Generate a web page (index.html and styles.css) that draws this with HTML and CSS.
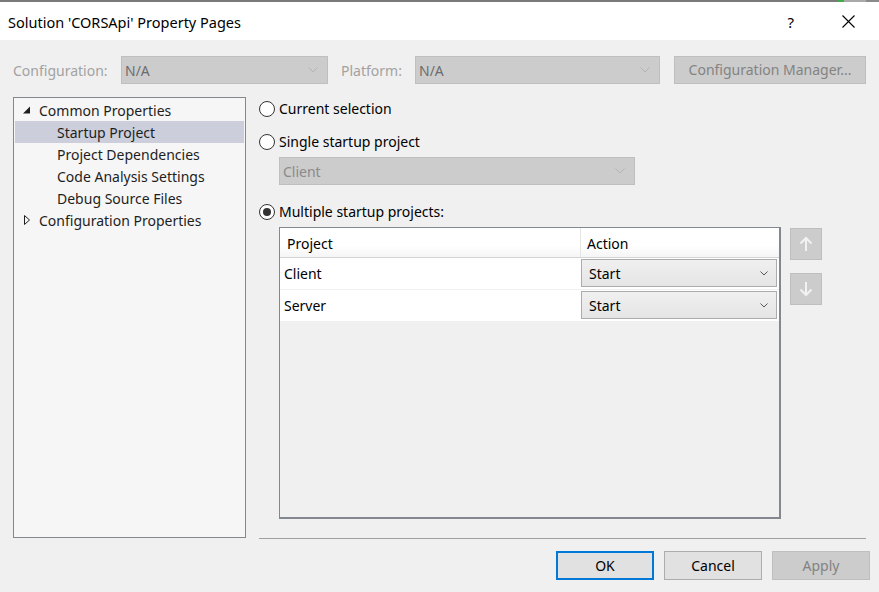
FILE: index.html
```html
<!DOCTYPE html>
<html lang="en">
<head>
<meta charset="utf-8">
<title>Solution 'CORSApi' Property Pages</title>
<link rel="stylesheet" href="styles.css">
</head>
<body>
<div class="topline"><span class="tl-fill"></span><span class="tl-green"></span><span class="tl-gray"></span><span class="tl-end"></span></div>
<header class="titlebar">
  <span class="title">Solution 'CORSApi' Property Pages</span>
  <span class="help">?</span>
  <svg class="close" width="13" height="13" viewBox="0 0 13 13"><path d="M0.5 0.5L12.5 12.5M12.5 0.5L0.5 12.5" stroke="#000" stroke-width="1.1" fill="none"/></svg>
</header>
<main class="dialog">
  <div class="config-row">
    <span class="lbl lbl-config">Configuration:</span>
    <div class="combo combo-disabled combo-config"><span class="combo-text">N/A</span><svg class="chev" width="10" height="6" viewBox="0 0 10 6"><path d="M0.5 0.5L5 5L9.5 0.5" stroke="#b4b4b4" fill="none"/></svg></div>
    <span class="lbl lbl-platform">Platform:</span>
    <div class="combo combo-disabled combo-platform"><span class="combo-text">N/A</span><svg class="chev" width="10" height="6" viewBox="0 0 10 6"><path d="M0.5 0.5L5 5L9.5 0.5" stroke="#b4b4b4" fill="none"/></svg></div>
    <button class="btn btn-disabled btn-cfgmgr">Configuration Manager...</button>
  </div>
  <div class="body-area">
    <ul class="tree">
      <li class="node"><svg class="tri" width="8" height="8" viewBox="0 0 8 8"><path d="M7 0.5V7.5H0Z" fill="#1e1e1e"/></svg><span>Common Properties</span></li>
      <li class="node child selected"><span>Startup Project</span></li>
      <li class="node child"><span>Project Dependencies</span></li>
      <li class="node child"><span>Code Analysis Settings</span></li>
      <li class="node child"><span>Debug Source Files</span></li>
      <li class="node"><svg class="tri" width="8" height="10" viewBox="0 0 8 10"><path d="M1.5 0.5V9.5L6.5 5Z" stroke="#1e1e1e" fill="none"/></svg><span>Configuration Properties</span></li>
    </ul>
    <section class="right">
      <label class="radio-row r1"><span class="radio"></span>Current selection</label>
      <label class="radio-row r2"><span class="radio"></span>Single startup project</label>
      <div class="combo combo-disabled combo-single"><span class="combo-text dim">Client</span><svg class="chev" width="10" height="6" viewBox="0 0 10 6"><path d="M0.5 0.5L5 5L9.5 0.5" stroke="#b4b4b4" fill="none"/></svg></div>
      <label class="radio-row r3"><span class="radio checked"></span>Multiple startup projects:</label>
      <div class="grid-wrap">
        <div class="table">
          <div class="trow thead">
            <div class="cell c-proj">Project</div>
            <div class="cell c-act">Action</div>
          </div>
          <div class="trow">
            <div class="cell c-proj name">Client</div>
            <div class="cell c-act"><div class="combo combo-start"><span class="combo-text">Start</span><svg class="chev" width="8" height="5" viewBox="0 0 8 5"><path d="M0.5 0.5L4 4L7.5 0.5" stroke="#555" fill="none"/></svg></div></div>
          </div>
          <div class="trow">
            <div class="cell c-proj name">Server</div>
            <div class="cell c-act"><div class="combo combo-start"><span class="combo-text">Start</span><svg class="chev" width="8" height="5" viewBox="0 0 8 5"><path d="M0.5 0.5L4 4L7.5 0.5" stroke="#555" fill="none"/></svg></div></div>
          </div>
        </div>
        <div class="arrows">
          <button class="arrow-btn"><svg width="14" height="16" viewBox="0 0 14 16"><path d="M7 15V2M1.5 7.5L7 2L12.5 7.5" stroke="#f2f2f2" stroke-width="2" fill="none"/></svg></button>
          <button class="arrow-btn"><svg width="14" height="16" viewBox="0 0 14 16"><path d="M7 1V14M1.5 8.5L7 14L12.5 8.5" stroke="#f2f2f2" stroke-width="2" fill="none"/></svg></button>
        </div>
      </div>
      <div class="separator"></div>
    </section>
  </div>
  <div class="footer">
    <button class="btn btn-ok">OK</button>
    <button class="btn btn-normal">Cancel</button>
    <button class="btn btn-disabled">Apply</button>
  </div>
</main>
<div class="bottomline"></div>
</body>
</html>
```
FILE: styles.css
```css
* { box-sizing: border-box; }
html, body { margin: 0; padding: 0; }
body {
  width: 879px;
  height: 592px;
  overflow: hidden;
  background: #f0f0f0;
  font-family: "Noto Sans", "Open Sans", sans-serif;
  font-size: 14px;
  color: #000;
}
.topline { display: flex; height: 2px; background: #7a7a7a; }
.tl-fill { flex: 0 0 838px; }
.tl-green { flex: 0 0 6px; background: #3fae49; }
.tl-gray { flex: 0 0 22px; background: #a9a9a9; }
.tl-end { flex: 1; background: #8a8a8a; }

.titlebar {
  display: flex;
  align-items: center;
  height: 38px;
  background: #fff;
  padding-left: 8px;
  font-size: 14.5px;
  line-height: 20px;
}
.title { flex: 1; padding-top: 1px; }
.help { margin-right: 48px; font-size: 15px; padding-top: 1px; }
.close { margin-right: 24px; }

.dialog { height: 549px; }
.config-row {
  display: flex;
  align-items: center;
  height: 28px;
  margin-top: 16px;
  padding-left: 13px;
}
.lbl { color: #a2a2a2; line-height: 20px; padding-top: 1px; }
.lbl-config { width: 108px; }
.lbl-platform { width: 74px; margin-left: 13px; }
.combo {
  display: flex;
  align-items: center;
  justify-content: space-between;
  height: 28px;
  padding: 0 9px 0 3px;
  border: 1px solid #bfbfbf;
  line-height: 20px;
}
.combo-text { padding-top: 1px; }
.combo-disabled { background: #cccccc; color: #6d6d6d; }
.combo-config { width: 207px; }
.combo-platform { width: 245px; }
.combo-text.dim { color: #8a8a8a; }
.btn {
  height: 29px;
  font-family: inherit;
  font-size: 14px;
  padding: 0;
  line-height: 20px;
}
.btn-disabled { background: #cccccc; border: 1px solid #bfbfbf; color: #838383; }
.btn-cfgmgr { width: 192px; height: 28px; margin-left: 14px; }

.body-area { display: flex; margin-top: 13px; padding-left: 13px; }
.tree {
  list-style: none;
  margin: 0;
  width: 233px;
  height: 441px;
  padding: 1px 1px;
  background: #f6f6f6;
  border: 1px solid #828790;
}
.node {
  display: flex;
  align-items: center;
  height: 22px;
  padding-left: 8px;
  line-height: 20px;
  color: #1e1e1e;
}
.node span { padding-top: 1px; }
.node .tri { margin-right: 8px; flex: 0 0 auto; }
.node.child { padding-left: 42px; }
.node.selected { background: #cccedb; }

.right {
  display: flex;
  flex-direction: column;
  width: 607px;
  height: 442px;
  margin-left: 13px;
}
.radio-row {
  display: flex;
  align-items: center;
  height: 24px;
  line-height: 20px;
}
.r2 { margin-top: 9px; }
.r3 { margin-top: 15px; }
.radio {
  width: 16px;
  height: 16px;
  border: 1px solid #333;
  border-radius: 50%;
  background: #fff;
  margin-right: 4px;
  display: flex;
  align-items: center;
  justify-content: center;
}
.radio.checked::after {
  content: "";
  width: 8px;
  height: 8px;
  border-radius: 50%;
  background: #333;
}
.combo-single { width: 356px; margin-left: 20px; margin-top: 3px; }

.grid-wrap { display: flex; margin-top: 3px; margin-left: 20px; }
.table {
  width: 502px;
  height: 292px;
  border: 1px solid #828790;
  border-right-width: 2px;
  border-bottom-width: 2px;
  background: #f0f0f0;
}
.trow { display: flex; height: 32px; background: #fff; border-bottom: 1px solid #f0f0f0; }
.thead {
  height: 30px;
  background: linear-gradient(#ffffff 60%, #f5f5f5);
  border-bottom: 1px solid #d5d5d5;
}
.cell { display: flex; align-items: center; line-height: 20px; }
.thead .cell { padding-top: 2px; }
.c-proj { width: 301px; padding-left: 7px; }
.thead .c-proj { border-right: 1px solid #e5e5e5; }
.c-act { flex: 1; padding-left: 6px; }
.name { padding-left: 4px; }
.trow:not(.thead) .c-act { padding: 1px 2px 2px 0; align-items: stretch; }
.combo-start {
  flex: 1;
  height: 28px;
  padding: 0 8px 0 7px;
  border: 1px solid #acacac;
  background: linear-gradient(#f0f0f0, #e5e5e5);
}
.arrows { display: flex; flex-direction: column; gap: 13px; margin-left: 9px; margin-top: 1px; }
.arrow-btn {
  width: 32px;
  height: 32px;
  padding: 0;
  background: #cccccc;
  border: 1px solid #bfbfbf;
  display: flex;
  align-items: center;
  justify-content: center;
}
.separator { margin-top: auto; height: 1px; background: #a0a0a0; }

.footer {
  display: flex;
  justify-content: flex-end;
  gap: 10px;
  margin-top: 12px;
  padding-right: 9px;
}
.footer .btn { width: 98px; }
.btn-ok { background: #e1e1e1; border: 2px solid #0078d7; color: #000; }
.btn-normal { background: #e1e1e1; border: 1px solid #adadad; color: #000; }
.bottomline { height: 3px; background: #5e5e5e; }
```
